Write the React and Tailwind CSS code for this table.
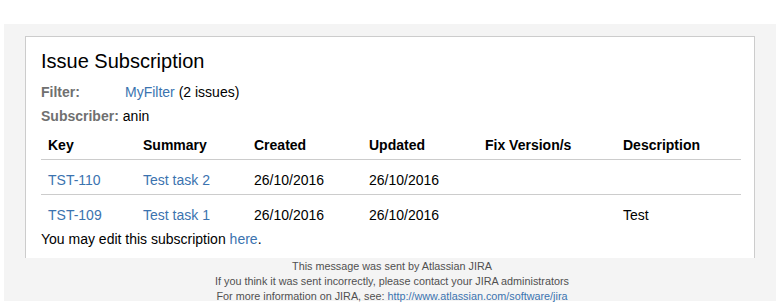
const rows = [
  { key: 'TST-110', summary: 'Test task 2', created: '26/10/2016', updated: '26/10/2016', fix: '', desc: '' },
  { key: 'TST-109', summary: 'Test task 1', created: '26/10/2016', updated: '26/10/2016', fix: '', desc: 'Test' },
];

const headers = ['Key', 'Summary', 'Created', 'Updated', 'Fix Version/s', 'Description'];
const cols = ['w-[95px]', 'w-[111px]', 'w-[115px]', 'w-[116px]', 'w-[138px]', 'w-[125px]'];

export default function App() {
  return (
    <div className="bg-white w-[782px] h-[307px] pt-[24px] pl-[4px] font-['Liberation_Sans',Arial,sans-serif] text-[14px] text-[#000]">
      <div className="bg-[#f4f4f4] w-[772px] h-[277px] pt-[12px] pl-[21px]">
        <div className="bg-white w-[730px] h-[222px] border border-b-0 border-[#cccccc] pl-[15px] pt-[12px]">
          <h1 className="text-[20px] leading-[24px] font-normal">Issue Subscription</h1>
          <div className="mt-[7px] flex h-[24px] items-center">
            <span className="w-[84px] font-bold text-[#707070]">Filter:</span>
            <span>
              <a className="text-[#3b73af]">MyFilter</a> (2 issues)
            </span>
          </div>
          <div className="flex h-[24px] items-center">
            <span className="font-bold text-[#707070] mr-[4px]">Subscriber:</span>
            <span>anin</span>
          </div>

          {/* table */}
          <div className="w-[700px] leading-[16px]">
            <div className="flex border-b border-[#cccccc] pt-[9px] pb-[6px] font-bold">
              {headers.map((h, i) => (
                <div key={h} className={`${cols[i]} pl-[7px]`}>{h}</div>
              ))}
            </div>
            {rows.map((r, i) => (
              <div key={r.key} className={`flex pt-[12px] pb-[6px] ${i === 0 ? 'border-b border-[#cccccc]' : ''}`}>
                <div className={`${cols[0]} pl-[7px]`}><a className="text-[#3b73af]">{r.key}</a></div>
                <div className={`${cols[1]} pl-[7px]`}><a className="text-[#3b73af]">{r.summary}</a></div>
                <div className={`${cols[2]} pl-[7px]`}>{r.created}</div>
                <div className={`${cols[3]} pl-[7px]`}>{r.updated}</div>
                <div className={`${cols[4]} pl-[7px]`}>{r.fix}</div>
                <div className={`${cols[5]} pl-[7px]`}>{r.desc}</div>
              </div>
            ))}
          </div>

          <p className="leading-[20px]">
            You may edit this subscription <a className="text-[#3b73af]">here</a>.
          </p>
        </div>
        <div className="w-[730px] ml-[2px] pt-[1px] text-center text-[10.8px] leading-[15px] text-[#505050]">
          <div>This message was sent by Atlassian JIRA</div>
          <div>If you think it was sent incorrectly, please contact your JIRA administrators</div>
          <div>
            For more information on JIRA, see: <a className="text-[#3b73af]">http://www.atlassian.com/software/jira</a>
          </div>
        </div>
      </div>
    </div>
  );
}
